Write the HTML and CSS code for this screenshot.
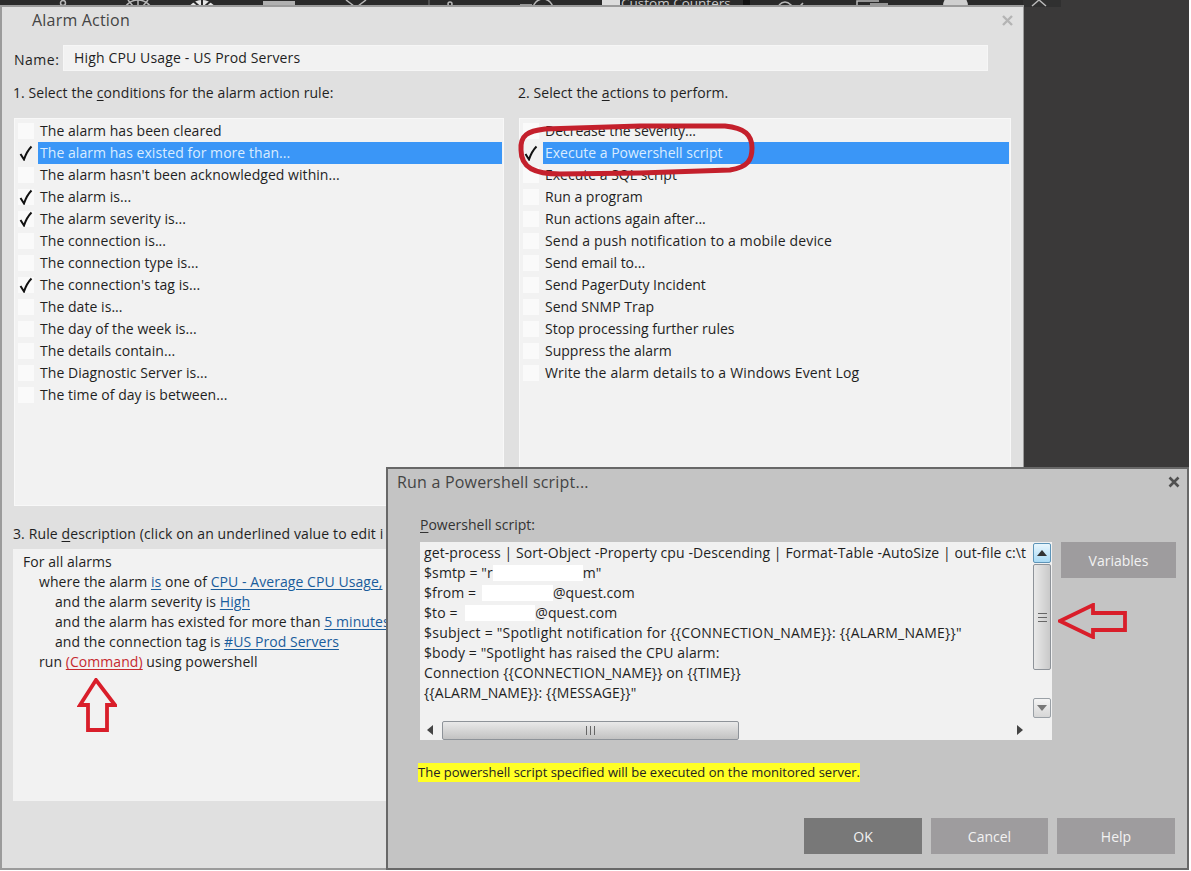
FILE: index.html
```html
<!DOCTYPE html>
<html lang="en">
<head>
<meta charset="utf-8">
<title>Alarm Action</title>
<link rel="stylesheet" href="styles.css">
</head>
<body>
<div class="desktop">
  <svg class="ribbon" width="1061" height="7" viewBox="0 0 1061 7" aria-hidden="true">
    <rect width="1023" height="7" fill="#2a2a2a"/>
    <rect x="1023" width="38" height="7" fill="#303030"/>
    <g fill="none" stroke="#b9b9b9" stroke-width="1.5">
      <circle cx="63" cy="3" r="2.5"/>
      <circle cx="138" cy="15" r="15"/>
      <path d="M128 0l5 6M148 0l-5 6M138 0v6"/>
      <path d="M346 0l8 6M366 0l-8 6"/>
      <circle cx="450" cy="4" r="2"/>
      <path d="M520 5h12M533 9a10 10 0 0 1 20 0"/>
      <path d="M779 5q6-6 12 0t12-2"/>
      <path d="M857 6V1h22M870 4h18"/>
      <path d="M1032 6l7-6 7 6"/>
    </g>
    <circle cx="202" cy="16" r="16" fill="#e6e6e6"/>
    <path d="M202 0v8M192 0l8 7M212 0l-8 7" stroke="#2a2a2a" stroke-width="2" fill="none"/>
    <rect x="263" y="1" width="32" height="6" fill="#b0b0b0"/>
    <path d="M429 0v6" stroke="#777"/>
    <rect x="743" width="7" height="5" fill="#111"/>
    <rect x="602" y="0" width="18" height="5" fill="#ddd"/>
    <path d="M943 6a12 12 0 0 1 25 0z" fill="#cfcfcf"/>
    <text x="621" y="8" class="ribbon-text">Custom Counters</text>
  </svg>

  <section class="window main-window">
    <header class="main-title">
      <span class="title-text">Alarm Action</span>
      <svg class="close-main" width="11" height="11" viewBox="0 0 11 11" aria-hidden="true"><path d="M1 1l9 9M10 1l-9 9"/></svg>
    </header>
    <div class="name-row">
      <span class="name-label">Name:</span>
      <div class="name-input">High CPU Usage - US Prod Servers</div>
    </div>
    <div class="columns">
      <div class="column">
        <div class="caption">1. Select the <u>c</u>onditions for the alarm action rule:</div>
        <ul class="checklist checklist-conditions">
          <li class="row"><span class="box"></span><span class="label">The alarm has been cleared</span></li>
          <li class="row selected"><span class="box"><svg class="tick" viewBox="0 0 16 16"><path d="M2.5 9l3.5 5.5C7.5 10 10 5 13.5 1.5"/></svg></span><span class="label">The alarm has existed for more than...</span></li>
          <li class="row"><span class="box"></span><span class="label">The alarm hasn't been acknowledged within...</span></li>
          <li class="row"><span class="box"><svg class="tick" viewBox="0 0 16 16"><path d="M2.5 9l3.5 5.5C7.5 10 10 5 13.5 1.5"/></svg></span><span class="label">The alarm is...</span></li>
          <li class="row"><span class="box"><svg class="tick" viewBox="0 0 16 16"><path d="M2.5 9l3.5 5.5C7.5 10 10 5 13.5 1.5"/></svg></span><span class="label">The alarm severity is...</span></li>
          <li class="row"><span class="box"></span><span class="label">The connection is...</span></li>
          <li class="row"><span class="box"></span><span class="label">The connection type is...</span></li>
          <li class="row"><span class="box"><svg class="tick" viewBox="0 0 16 16"><path d="M2.5 9l3.5 5.5C7.5 10 10 5 13.5 1.5"/></svg></span><span class="label">The connection's tag is...</span></li>
          <li class="row"><span class="box"></span><span class="label">The date is...</span></li>
          <li class="row"><span class="box"></span><span class="label">The day of the week is...</span></li>
          <li class="row"><span class="box"></span><span class="label">The details contain...</span></li>
          <li class="row"><span class="box"></span><span class="label">The Diagnostic Server is...</span></li>
          <li class="row"><span class="box"></span><span class="label">The time of day is between...</span></li>
        </ul>
      </div>
      <div class="column">
        <div class="caption">2. Select the <u>a</u>ctions to perform.</div>
        <ul class="checklist checklist-actions">
          <li class="row"><span class="box"></span><span class="label">Decrease the severity...</span></li>
          <li class="row selected"><span class="box"><svg class="tick" viewBox="0 0 16 16"><path d="M2.5 9l3.5 5.5C7.5 10 10 5 13.5 1.5"/></svg></span><span class="label">Execute a Powershell script</span></li>
          <li class="row"><span class="box"></span><span class="label">Execute a SQL script</span></li>
          <li class="row"><span class="box"></span><span class="label">Run a program</span></li>
          <li class="row"><span class="box"></span><span class="label">Run actions again after...</span></li>
          <li class="row row-wide"><span class="box"></span><span class="label">Send a push notification to a mobile device</span></li>
          <li class="row"><span class="box"></span><span class="label">Send email to...</span></li>
          <li class="row"><span class="box"></span><span class="label">Send PagerDuty Incident</span></li>
          <li class="row"><span class="box"></span><span class="label">Send SNMP Trap</span></li>
          <li class="row"><span class="box"></span><span class="label">Stop processing further rules</span></li>
          <li class="row"><span class="box"></span><span class="label">Suppress the alarm</span></li>
          <li class="row row-wide"><span class="box"></span><span class="label">Write the alarm details to a Windows Event Log</span></li>
        </ul>
      </div>
    </div>
    <div class="caption rule-caption">3. Rule <u>d</u>escription (click on an underlined value to edit i</div>
    <div class="rule-box">
      <div class="rule-line">For all alarms</div>
      <div class="rule-line indent-1">where the alarm <a class="link">is</a> one of <a class="link">CPU - Average CPU Usage,</a></div>
      <div class="rule-line indent-2">and the alarm severity is <a class="link">High</a></div>
      <div class="rule-line indent-2">and the alarm has existed for more than <a class="link">5 minutes</a></div>
      <div class="rule-line indent-2">and the connection tag is <a class="link">#US Prod Servers</a></div>
      <div class="rule-line indent-1">run <a class="link link-red">(Command)</a> using powershell</div>
    </div>
  </section>

  <svg class="annotation ring" width="245" height="60" viewBox="0 0 245 60" aria-hidden="true">
    <path d="M7 30C6 15 14 11 31 9L126 6H211C231 8 238 15 238 28 238 40 234 47 216 50L126 53 46 54C21 54 7 48 7 30z"/>
  </svg>
  <svg class="annotation arrow-up" width="40" height="54" viewBox="0 0 40 54" aria-hidden="true">
    <path d="M19 2L3 27h8v25h19V27h8z"/>
  </svg>

  <section class="window script-dialog">
    <header class="dialog-title">
      <span class="title-text">Run a Powershell script...</span>
      <svg class="close-dialog" width="12" height="12" viewBox="0 0 12 12" aria-hidden="true"><path d="M1.5 1.5l9 9M10.5 1.5l-9 9"/></svg>
    </header>
    <div class="script-label"><u>P</u>owershell script:</div>
    <div class="script-row">
      <div class="editor">
        <div class="editor-top">
          <div class="code">
            <div class="code-line">get-process | Sort-Object -Property cpu -Descending | Format-Table -AutoSize | out-file c:\t</div>
            <div class="code-line">$smtp = "r<span class="redact redact-smtp"></span>m"</div>
            <div class="code-line">$from = <span class="redact redact-from"></span>@quest.com</div>
            <div class="code-line">$to = <span class="redact redact-to"></span>@quest.com</div>
            <div class="code-line code-line-wide">$subject = "Spotlight notification for {{CONNECTION_NAME}}: {{ALARM_NAME}}"</div>
            <div class="code-line">$body = "Spotlight has raised the CPU alarm:</div>
            <div class="code-line">Connection {{CONNECTION_NAME}} on {{TIME}}</div>
            <div class="code-line">{{ALARM_NAME}}: {{MESSAGE}}"</div>
          </div>
          <div class="vscroll">
            <div class="sb-btn sb-btn-up"><svg width="10" height="6" viewBox="0 0 10 6"><path d="M5 0l5 6H0z"/></svg></div>
            <div class="sb-thumb-v"><svg width="11" height="11" viewBox="0 0 11 11"><path d="M1 1.5h9M1 5.5h9M1 9.5h9"/></svg></div>
            <div class="sb-btn sb-btn-down"><svg width="10" height="6" viewBox="0 0 10 6"><path d="M0 0h10L5 6z"/></svg></div>
          </div>
        </div>
        <div class="hscroll">
          <svg class="sb-arrow" width="6" height="10" viewBox="0 0 6 10"><path d="M6 0v10L0 5z"/></svg>
          <div class="sb-thumb-h"><svg width="11" height="11" viewBox="0 0 11 11"><path d="M1.5 1v9M5.5 1v9M9.5 1v9"/></svg></div>
          <svg class="sb-arrow sb-arrow-right" width="6" height="10" viewBox="0 0 6 10"><path d="M0 0v10l6-5z"/></svg>
        </div>
      </div>
      <button class="btn btn-variables" type="button">Variables</button>
    </div>
    <div class="warning-row"><span class="warning">The powershell script specified will be executed on the monitored server.</span></div>
    <div class="actions">
      <button class="btn btn-action btn-default" type="button">OK</button>
      <button class="btn btn-action" type="button">Cancel</button>
      <button class="btn btn-action btn-help" type="button">Help</button>
    </div>
  </section>

  <svg class="annotation arrow-left" width="70" height="36" viewBox="0 0 70 36" aria-hidden="true">
    <path d="M2 18L35 2v8h32v17H35v7z"/>
  </svg>
</div>
</body>
</html>
```
FILE: styles.css
```css
* { box-sizing: border-box; }
html, body { margin: 0; padding: 0; background: #fff; }
body { font-family: "Open Sans", "Noto Sans", sans-serif; font-size: 14px; color: #1f1f1f; }
u { text-underline-offset: 2px; }
ul { list-style: none; margin: 0; padding: 0; }

.desktop { position: relative; width: 1189px; height: 870px; background: #3a3939; overflow: hidden; }
.ribbon { position: absolute; left: 0; top: 0; display: block; }
.ribbon-text { font-family: "Open Sans", sans-serif; font-size: 13.5px; fill: #c8c8c8; }

.window { position: absolute; }
.title-text { font-size: 16px; letter-spacing: 0.2px; color: #444; }

.main-window { left: 0; top: 5px; width: 1024px; height: 865px; background: #e0e0e0; border: 2px solid #9b9b9b; border-right-width: 1px; }
.main-title { height: 26px; padding: 0 10px 0 30px; display: flex; align-items: center; justify-content: space-between; }
.close-main { fill: none; stroke: #b4b4b4; stroke-width: 2.4; }
.name-row { display: flex; align-items: center; height: 26px; margin-top: 12px; padding-left: 12px; }
.name-label { width: 49px; padding-top: 3px; letter-spacing: 0.5px; }
.name-input { width: 925px; height: 26px; line-height: 24px; padding-left: 10px; letter-spacing: 0.15px; background: #f2f2f2; border: 1px solid #f6f6f6; }

.columns { display: grid; grid-template-columns: 490px 492px; column-gap: 15px; margin-top: 11px; padding-left: 12px; }
.caption { height: 22px; line-height: 22px; margin-left: -1px; letter-spacing: 0.08px; }
.checklist { margin-top: 14px; height: 388px; padding: 1px 1px 0 3px; background: #f2f2f2; border: 1px solid #f8f8f8; }
.checklist-conditions { letter-spacing: 0.05px; }
.row { display: flex; height: 22px; line-height: 22px; }
.row-wide { letter-spacing: 0.17px; }
.box { flex: none; width: 16px; height: 16px; margin-top: 3px; margin-right: 4px; background: #fafafa; }
.row.selected .box { background: transparent; }
.tick { display: block; width: 16px; height: 16px; fill: none; stroke: #111; stroke-width: 2; }
.label { flex: 1; padding-left: 2px; white-space: nowrap; }
.selected .label { background: #3a96f7; color: #d9ecff; }

.caption.rule-caption { margin: 17px 0 0 11px; white-space: nowrap; letter-spacing: 0.12px; }
.rule-box { margin: 4px 0 0 11px; width: 998px; height: 252px; padding: 3px 10px; background: #f2f2f2; white-space: nowrap; letter-spacing: 0.06px; }
.rule-line { height: 20px; line-height: 20px; }
.indent-1 { padding-left: 16px; }
.indent-2 { padding-left: 32px; }
.link { color: #1a5d9c; text-decoration: underline; text-underline-offset: 2px; }
.link-red { color: #c62a2f; }

.annotation { position: absolute; fill: none; stroke: #d91e2a; }
.ring { left: 514px; top: 120px; stroke: #c4202c; stroke-width: 5; }
.arrow-up { left: 77px; top: 678px; stroke-width: 3.8; }
.arrow-left { left: 1058px; top: 603px; stroke-width: 3.8; }

.script-dialog { left: 386px; top: 467px; width: 803px; height: 403px; background: #c4c4c4; border: 2px solid #686868; }
.dialog-title { height: 26px; padding: 0 7px 0 9px; display: flex; align-items: center; justify-content: space-between; }
.close-dialog { fill: none; stroke: #505050; stroke-width: 2.6; }
.script-label { margin: 20px 0 0 32px; height: 20px; line-height: 20px; color: #333; }
.script-row { display: flex; align-items: flex-start; margin: 7px 0 0 32px; }
.editor { width: 632px; height: 198px; background: #f1f1f1; display: flex; flex-direction: column; }
.editor-top { flex: 1; display: flex; min-height: 0; }
.code { width: 607px; padding: 1px 0 0 4px; overflow: hidden; white-space: nowrap; letter-spacing: 0.1px; }
.code-line { height: 20px; line-height: 20px; }
.code-line-wide { letter-spacing: 0.23px; }
.redact { display: inline-block; height: 16px; vertical-align: -3px; background: #fff; }
.redact-smtp { width: 90px; }
.redact-from { width: 71px; margin-left: 2px; }
.redact-to { width: 70px; margin-left: 4px; }

.vscroll { width: 25px; padding: 1px 1px 0 6px; display: flex; flex-direction: column; }
.sb-btn { height: 20px; flex: none; display: flex; align-items: center; justify-content: center; border: 1px solid #9aa0a6; border-radius: 2px; }
.sb-btn svg { fill: #333; }
.sb-btn-up { background: linear-gradient(#e8f6fd, #a9daf5); border-color: #5d94b8; }
.sb-btn-down { background: linear-gradient(#f4f4f4, #d6d6d6); margin-top: 28px; }
.sb-btn-down svg { fill: #777; }
.sb-thumb-v { height: 106px; margin-top: 1px; flex: none; display: flex; align-items: center; justify-content: center; border: 1px solid #8e9399; border-radius: 2px; background: linear-gradient(90deg, #e9e9e9, #c9c9c9); }
.sb-thumb-v svg, .sb-thumb-h svg { fill: none; stroke: #666; stroke-width: 1; }

.hscroll { height: 20px; display: flex; align-items: center; padding-left: 7px; }
.hscroll .sb-arrow { fill: #444; flex: none; }
.sb-thumb-h { width: 297px; height: 19px; margin-left: 9px; flex: none; display: flex; align-items: center; justify-content: center; border: 1px solid #8e9399; border-radius: 2px; background: linear-gradient(#e9e9e9, #c2c2c2); }
.sb-arrow-right { margin-left: 278px; }

.btn { font-family: inherit; font-size: 14px; color: #f2f2f2; border: 0; padding: 0; background: #9e9c9e; }
.btn-variables { width: 115px; height: 36px; margin-left: 9px; }

.warning-row { margin: 22px 0 0 30px; height: 20px; }
.warning { display: inline-block; height: 19px; line-height: 19px; font-size: 13px; background: #ffff24; color: #222; }

.actions { display: flex; gap: 9px; margin: 36px 0 0 416px; }
.btn-action { width: 117px; height: 36px; }
.btn-default, .btn-help { width: 118px; }
.btn-default { background: #787878; }
```
